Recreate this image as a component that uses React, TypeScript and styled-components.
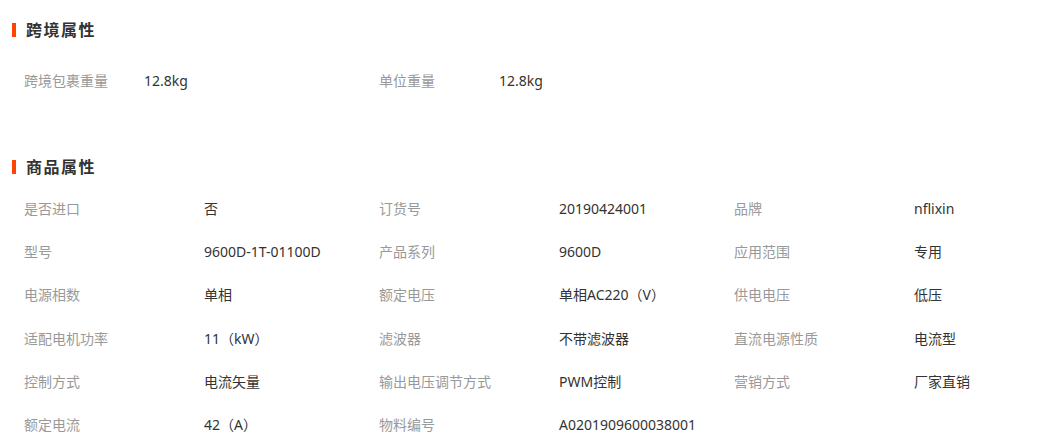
import React from "react";
import styled, { createGlobalStyle } from "styled-components";

const GlobalStyle = createGlobalStyle`
  html, body { margin: 0; padding: 0; background: #fff; }
  body {
    font-family: "Noto Sans", "Noto Sans CJK SC", sans-serif;
    color: #333;
  }
`;

const Page = styled.div`
  width: 1051px;
  padding-top: 20px;
`;

const SectionTitle = styled.h3<{ $gapTop?: number }>`
  margin: ${(p) => p.$gapTop ?? 0}px 0 0 12px;
  display: flex;
  align-items: center;
  gap: 10px;
  height: 20px;
  font-size: 16px;
  font-weight: bold;
  letter-spacing: 1.5px;
  color: #333;
  line-height: 20px;
`;

const Bar = styled.span`
  display: block;
  width: 4px;
  height: 14px;
  background: #ff4400;
`;

const Grid = styled.div<{ $cols: number; $gapTop: number }>`
  margin-top: ${(p) => p.$gapTop}px;
  padding-left: 24px;
  display: grid;
  grid-template-columns: repeat(${(p) => p.$cols}, 355px);
  grid-auto-rows: 43.2px;
`;

const Cell = styled.div<{ $labelWidth: number }>`
  display: grid;
  grid-template-columns: ${(p) => p.$labelWidth}px 1fr;
  align-items: center;
  font-size: 14px;
  line-height: 20px;
`;

const Label = styled.span`
  color: #999;
`;

const Value = styled.span`
  color: #333;
`;

const cross = [
  ["跨境包裹重量", "12.8kg"],
  ["单位重量", "12.8kg"],
];

const attrs = [
  ["是否进口", "否"],
  ["订货号", "20190424001"],
  ["品牌", "nflixin"],
  ["型号", "9600D-1T-01100D"],
  ["产品系列", "9600D"],
  ["应用范围", "专用"],
  ["电源相数", "单相"],
  ["额定电压", "单相AC220（V）"],
  ["供电电压", "低压"],
  ["适配电机功率", "11（kW）"],
  ["滤波器", "不带滤波器"],
  ["直流电源性质", "电流型"],
  ["控制方式", "电流矢量"],
  ["输出电压调节方式", "PWM控制"],
  ["营销方式", "厂家直销"],
  ["额定电流", "42（A）"],
  ["物料编号", "A0201909600038001"],
];

export default function App() {
  return (
    <Page>
      <GlobalStyle />
      <SectionTitle>
        <Bar />
        跨境属性
      </SectionTitle>
      <Grid $cols={2} $gapTop={19.4}>
        {cross.map(([l, v]) => (
          <Cell key={l} $labelWidth={120}>
            <Label>{l}</Label>
            <Value>{v}</Value>
          </Cell>
        ))}
      </Grid>
      <SectionTitle $gapTop={54.4}>
        <Bar />
        商品属性
      </SectionTitle>
      <Grid $cols={3} $gapTop={10.4}>
        {attrs.map(([l, v]) => (
          <Cell key={l} $labelWidth={180}>
            <Label>{l}</Label>
            <Value>{v}</Value>
          </Cell>
        ))}
      </Grid>
    </Page>
  );
}
